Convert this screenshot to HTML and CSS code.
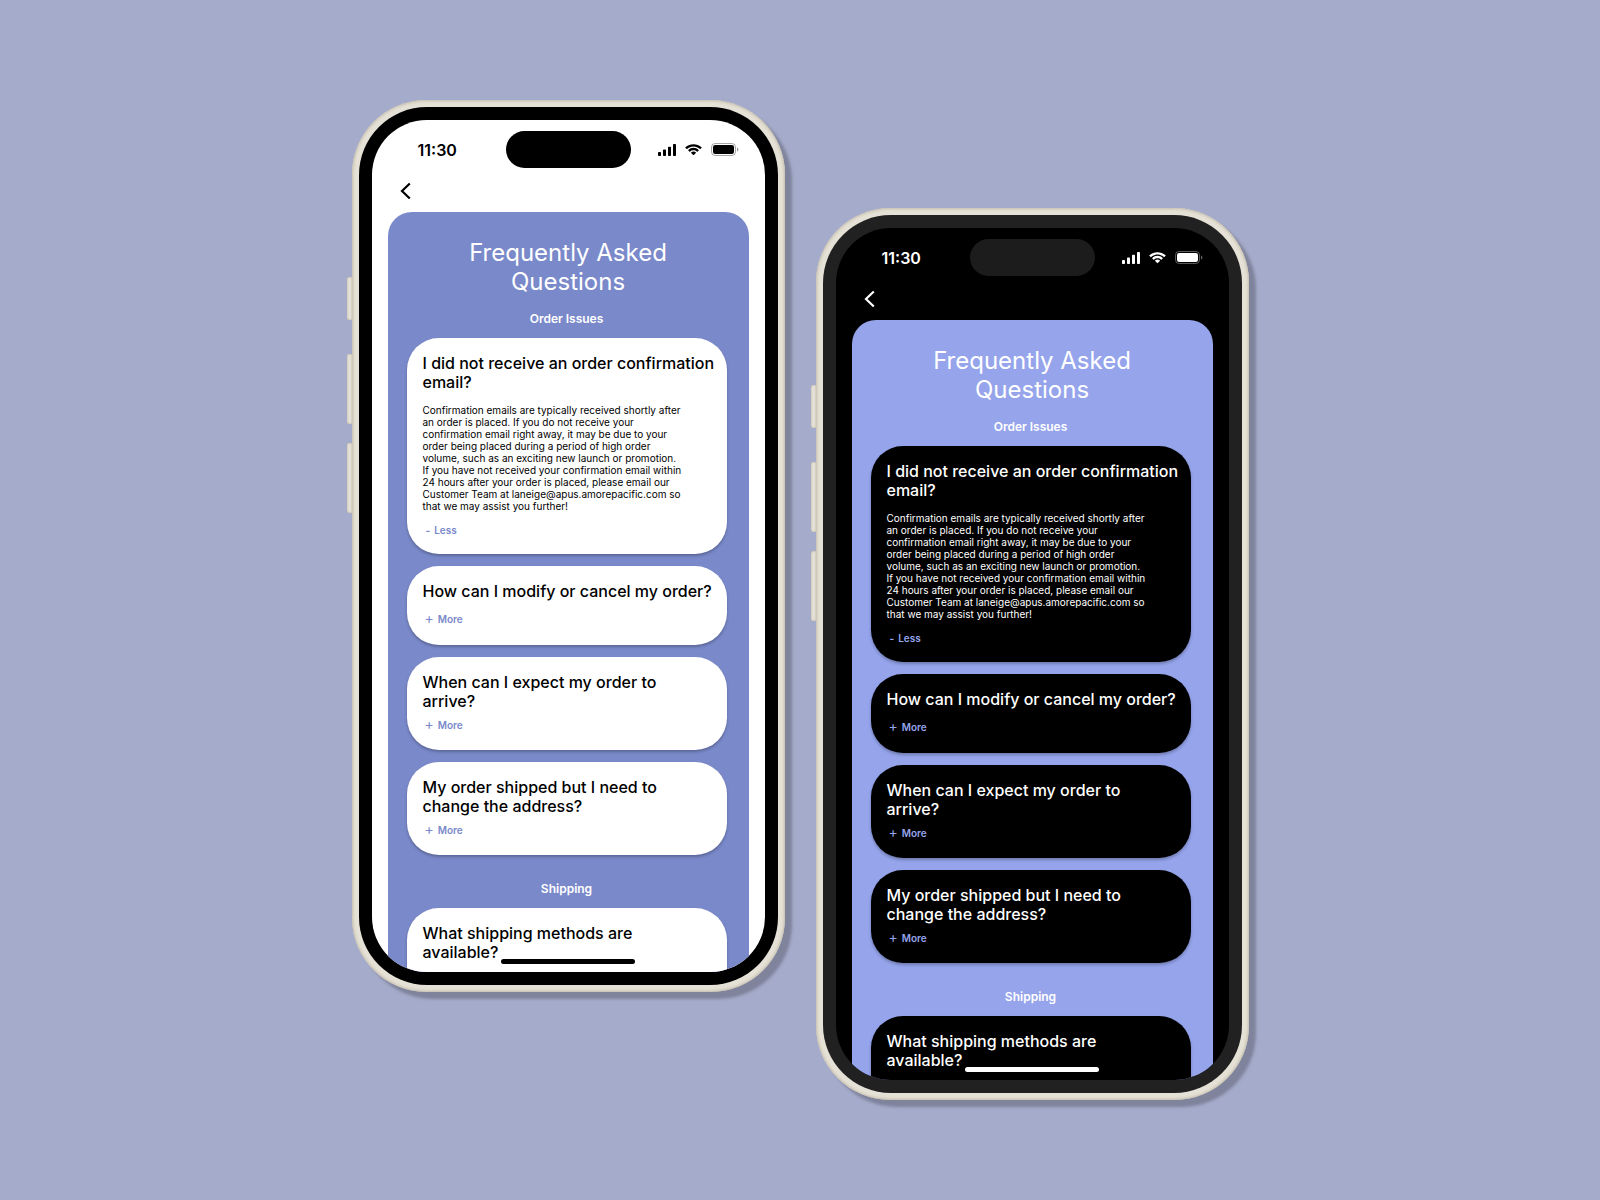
FILE: index.html
```html
<!DOCTYPE html>
<html lang="en">
<head>
<meta charset="utf-8">
<meta name="viewport" content="width=device-width, initial-scale=1">
<title>Frequently Asked Questions</title>
<link rel="stylesheet" href="styles.css">
</head>
<body>
<svg class="sprite" aria-hidden="true">
  <symbol id="signal" viewBox="0 0 18 12">
    <rect x="0" y="8" width="3" height="4" rx="0.8"/><rect x="5" y="5.6" width="3" height="6.4" rx="0.8"/><rect x="10" y="2.8" width="3" height="9.2" rx="0.8"/><rect x="15" y="0" width="3" height="12" rx="0.8"/>
  </symbol>
  <symbol id="wifi" viewBox="0 0 17 12">
    <path d="M8.5 2.4c2.4 0 4.7.9 6.4 2.6.1.1.3.1.5 0l1.2-1.2c.2-.2.2-.4 0-.6C12.1-.9 4.900-.9.4 3.200c-.2.2-.2.400 0 .6l1.200 1.200c.2.100.400.100.500 0C3.800 3.300 6.100 2.400 8.500 2.400z"/>
    <path d="M8.500 6.300c1.300 0 2.600.5 3.500 1.400.2.100.400.100.500 0l1.200-1.200c.2-.2.2-.4 0-.6-2.900-2.800-7.500-2.800-10.400 0-.2.2-.2.400 0 .600l1.200 1.200c.1.100.400.100.500 0 .9-.9 2.200-1.400 3.500-1.400z"/>
    <path d="M10.900 8.900c.2-.1.200-.4 0-.500-1.400-1.200-3.400-1.200-4.800 0-.2.100-.2.400 0 .500l2.100 2.200c.2.200.400.200.600 0z"/>
  </symbol>
  <symbol id="battery" viewBox="0 0 28 13">
    <rect x="0.500" y="0.500" width="24" height="12" rx="3.600" fill="none" stroke="currentColor" opacity="0.35"/>
    <path d="M26 4.500v4c.8-.3 1.400-1.100 1.400-2s-.6-1.700-1.400-2z" opacity="0.400"/>
    <rect x="2" y="2" width="21" height="9" rx="2.200"/>
  </symbol>
  <symbol id="back" viewBox="0 0 12 18">
    <path d="M9.800 1.500 2 9l7.800 7.500" fill="none" stroke="currentColor" stroke-width="2.200"/>
  </symbol>
</svg>
<main class="stage">
  <section class="phone light">
    <div class="keys"><i class="key short"></i><i class="key"></i><i class="key"></i></div>
    <div class="screen">
      <header class="status">
        <span class="time">11:30</span>
        <span class="island"></span>
        <span class="indicators">
          <svg class="signal"><use href="#signal"/></svg>
          <svg class="wifi"><use href="#wifi"/></svg>
          <svg class="battery"><use href="#battery"/></svg>
        </span>
      </header>
      <nav class="nav"><button class="back" aria-label="Back"><svg><use href="#back"/></svg></button></nav>
      <div class="panel">
        <h1>Frequently Asked Questions</h1>
        <h2>Order Issues</h2>
        <article class="card open">
          <h3>I did not receive an order confirmation email?</h3>
          <p>Confirmation emails are typically received shortly after an order is placed. If you do not receive your confirmation email right away, it may be due to your order being placed during a period of high order volume, such as an exciting new launch or promotion. If you have not received your confirmation email within 24 hours after your order is placed, please email our Customer Team at laneige@apus.amorepacific.com so that we may assist you further!</p>
          <button class="toggle"><b>-</b>Less</button>
        </article>
        <article class="card single">
          <h3>How can I modify or cancel my order?</h3>
          <button class="toggle"><span>+</span>More</button>
        </article>
        <article class="card">
          <h3>When can I expect my order to arrive?</h3>
          <button class="toggle"><span>+</span>More</button>
        </article>
        <article class="card">
          <h3>My order shipped but I need to change the address?</h3>
          <button class="toggle"><span>+</span>More</button>
        </article>
        <h2 class="later">Shipping</h2>
        <article class="card last">
          <h3>What shipping methods are available?</h3>
        </article>
      </div>
      <span class="home"></span>
    </div>
  </section>
  <section class="phone dark">
    <div class="keys"><i class="key short"></i><i class="key"></i><i class="key"></i></div>
    <div class="screen">
      <header class="status">
        <span class="time">11:30</span>
        <span class="island"></span>
        <span class="indicators">
          <svg class="signal"><use href="#signal"/></svg>
          <svg class="wifi"><use href="#wifi"/></svg>
          <svg class="battery"><use href="#battery"/></svg>
        </span>
      </header>
      <nav class="nav"><button class="back" aria-label="Back"><svg><use href="#back"/></svg></button></nav>
      <div class="panel">
        <h1>Frequently Asked Questions</h1>
        <h2>Order Issues</h2>
        <article class="card open">
          <h3>I did not receive an order confirmation email?</h3>
          <p>Confirmation emails are typically received shortly after an order is placed. If you do not receive your confirmation email right away, it may be due to your order being placed during a period of high order volume, such as an exciting new launch or promotion. If you have not received your confirmation email within 24 hours after your order is placed, please email our Customer Team at laneige@apus.amorepacific.com so that we may assist you further!</p>
          <button class="toggle"><b>-</b>Less</button>
        </article>
        <article class="card single">
          <h3>How can I modify or cancel my order?</h3>
          <button class="toggle"><span>+</span>More</button>
        </article>
        <article class="card">
          <h3>When can I expect my order to arrive?</h3>
          <button class="toggle"><span>+</span>More</button>
        </article>
        <article class="card">
          <h3>My order shipped but I need to change the address?</h3>
          <button class="toggle"><span>+</span>More</button>
        </article>
        <h2 class="later">Shipping</h2>
        <article class="card last">
          <h3>What shipping methods are available?</h3>
        </article>
      </div>
      <span class="home"></span>
    </div>
  </section>
</main>
</body>
</html>
```
FILE: styles.css
```css
* { box-sizing: border-box; margin: 0; }

body {
  min-height: 100vh;
  background: #a5abca;
  font-family: Inter, "Liberation Sans", sans-serif;
  font-optical-sizing: none;
}

.sprite { display: none; }

.stage {
  display: flex;
  justify-content: center;
  align-items: flex-start;
  gap: 31px;
  padding: 100px 24px;
}

/* device frame */
.phone {
  --ink: #000;
  --paper: #fff;
  --bezel: #000;
  --island: #000;
  --panel: #7a89ca;
  --link: #7a89ca;
  position: relative;
  flex: none;
  padding: 20px;
  border-radius: 74px;
  background: #e5e1d6;
  box-shadow: 7px 7px 3px #7f839c, inset 0 0 3px 1px #c2bcaa;
}

.phone.dark {
  --ink: #fff;
  --paper: #000;
  --bezel: #212121;
  --island: #1c1c1c;
  --panel: #95a4eb;
  --link: #95a4eb;
  margin-top: 108px;
}

.keys {
  position: absolute;
  top: 177px;
  left: -5px;
  display: flex;
  flex-direction: column;
  gap: 19px;
}

.key {
  width: 5px;
  height: 70px;
  border-radius: 2px 0 0 2px;
  background: #e5e1d6;
  box-shadow: inset 0 0 2px #a9a491;
}

.key.short { height: 43px; margin-bottom: 15px; }

.screen {
  position: relative;
  display: flex;
  flex-direction: column;
  width: 393px;
  aspect-ratio: 393 / 852;
  min-height: 0;
  overflow: hidden;
  border-radius: 55px;
  background: var(--paper);
  box-shadow: 0 0 0 13px var(--bezel);
  color: var(--ink);
}

.status {
  flex: none;
  display: grid;
  grid-template-columns: 1fr 125px 1fr;
  align-items: center;
  padding: 11px 0 0;
}

.time { padding-left: 46px; font-size: 16px; line-height: 20px; font-weight: 600; }
.island { height: 37px; border-radius: 19px; background: var(--island); }

.indicators {
  display: flex;
  align-items: center;
  justify-content: flex-end;
  gap: 9px;
  padding-right: 26px;
}

.indicators svg { fill: currentColor; }
.signal { width: 18px; height: 12px; }
.wifi { width: 17px; height: 12px; }
.battery { width: 28px; height: 13px; }

.nav { flex: none; display: flex; padding: 14px 28px 12px; }

button { padding: 0; border: 0; background: none; color: inherit; font: inherit; }
.back, .back svg { display: block; width: 12px; height: 18px; }

/* question list */
.panel {
  flex: none;
  display: flex;
  flex-direction: column;
  gap: 12px;
  margin: 0 16px;
  padding: 26px 22px 22px 19px;
  border-radius: 24px 24px 0 0;
  background: var(--panel);
}

h1 {
  padding: 0 48px 0 51px;
  color: #fff;
  font-size: 24px;
  line-height: 29px;
  font-weight: 400;
  text-align: center;
}

h2 {
  padding-top: 3px;
  color: #fff;
  font-size: 12px;
  line-height: 15px;
  font-weight: 600;
  text-align: center;
}

.later { margin-top: 11px; }

.card {
  display: flex;
  flex-direction: column;
  align-items: flex-start;
  padding: 16px 8px 19px 16px;
  border-radius: 32px;
  background: var(--paper);
  box-shadow: 0 2px 3px rgba(0, 0, 0, 0.25);
}

.card.open { padding-bottom: 18px; }
.card.single { padding-bottom: 20px; }
.card.last { min-height: 120px; }

h3 { max-width: 256px; font-size: 16px; line-height: 19px; font-weight: 500; }
.open h3, .single h3 { max-width: 296px; }
.card p { width: 260px; margin-top: 12px; font-size: 10px; line-height: 12px; }

.toggle {
  display: flex;
  align-items: center;
  gap: 4px;
  height: 12px;
  margin: 8px 0 0 2px;
  color: var(--link);
  font-size: 10px;
  line-height: 12px;
  font-weight: 600;
}

.open .toggle, .single .toggle { margin-top: 12px; }
.toggle span { padding-bottom: 2px; font-size: 14px; font-weight: 400; }
.toggle b { padding-left: 1px; font-weight: 700; }

.home {
  position: absolute;
  bottom: 8px;
  left: 50%;
  width: 134px;
  height: 5px;
  margin-left: -67px;
  border-radius: 3px;
  background: var(--ink);
}
```
